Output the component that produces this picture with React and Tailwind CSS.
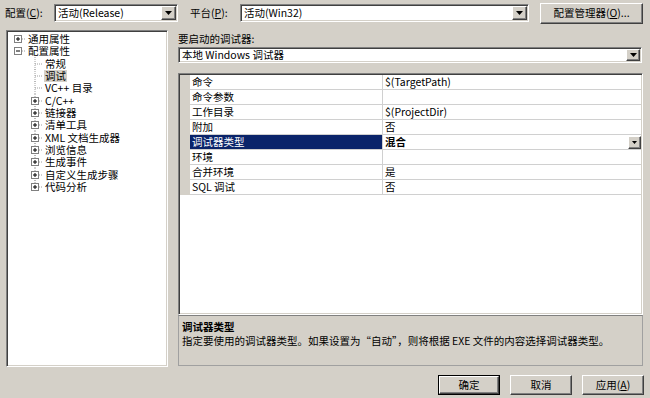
import React from "react";

const raised =
  "bg-[#d4d0c8] border border-t-white border-l-white border-r-[#404040] border-b-[#404040] shadow-[inset_-1px_-1px_0_#808080]";
const sunken =
  "bg-white border border-t-[#808080] border-l-[#808080] border-r-white border-b-white shadow-[inset_1px_1px_0_#404040,inset_-1px_-1px_0_#d4d0c8]";

const Arrow = () => (
  <svg width="7" height="4" viewBox="0 0 7 4">
    <path d="M0 0h7L3.5 4z" fill="#000" />
  </svg>
);

const Combo = ({ text, className }) => (
  <div className={`${sunken} ${className} flex items-stretch p-[1px]`}>
    <div className="flex-1 flex items-center pl-[2px] whitespace-nowrap overflow-hidden">
      {text}
    </div>
    <div className={`${raised} w-[15px] flex items-center justify-center`}>
      <Arrow />
    </div>
  </div>
);

const Label = ({ text, k }) => (
  <span className="whitespace-nowrap">
    {text}(<u>{k}</u>):
  </span>
);

// tree connector drawings
const TopGlyph = ({ open }) => (
  <svg width="20" height="12" viewBox="0 0 20 12" className="shrink-0">
    <rect x="6.5" y="2.5" width="7" height="7" fill="#fff" stroke="#808080" />
    <path d="M8 6h4" stroke="#000" />
    {!open && <path d="M10 4v4" stroke="#000" />}
    <path d="M14 6h4" stroke="#a0a0a0" strokeDasharray="1 1" />
  </svg>
);

const ChildGlyph = ({ box, last }) => (
  <svg width="37" height="12" viewBox="0 0 37 12" className="shrink-0 overflow-visible">
    <path
      d={last ? "M27 -1V6" : "M27 -1V13"}
      stroke="#a0a0a0"
      strokeDasharray="1 1"
    />
    <path d={box ? "M31 6h4" : "M27 6h8"} stroke="#a0a0a0" strokeDasharray="1 1" />
    {box && (
      <>
        <rect x="23.5" y="2.5" width="7" height="7" fill="#fff" stroke="#808080" />
        <path d="M25 6h4M27 4v4" stroke="#000" />
      </>
    )}
  </svg>
);

const tree = [
  { t: "常规" },
  { t: "调试", sel: true },
  { t: "VC++ 目录" },
  { t: "C/C++", box: true },
  { t: "链接器", box: true },
  { t: "清单工具", box: true },
  { t: "XML 文档生成器", box: true },
  { t: "浏览信息", box: true },
  { t: "生成事件", box: true },
  { t: "自定义生成步骤", box: true },
  { t: "代码分析", box: true },
];

const props = [
  ["命令", "$(TargetPath)"],
  ["命令参数", ""],
  ["工作目录", "$(ProjectDir)"],
  ["附加", "否"],
  ["调试器类型", "混合", true],
  ["环境", ""],
  ["合并环境", "是"],
  ["SQL 调试", "否"],
];

export default function App() {
  return (
    <div className="w-[650px] h-[398px] bg-[#d4d0c8] text-black text-[10.5px] leading-[12px] font-['Noto_Sans_CJK_SC',sans-serif] overflow-hidden">
      {/* top row */}
      <div className="flex items-center h-[26px] pl-[5px]">
        <div className="w-[49px]">
          <Label text="配置" k="C" />
        </div>
        <Combo text="活动(Release)" className="w-[124px] h-[18px]" />
        <div className="w-[50px] ml-[12px]">
          <Label text="平台" k="P" />
        </div>
        <Combo text="活动(Win32)" className="w-[289px] h-[18px]" />
        <button className={`${raised} ml-[11px] w-[103px] h-[21px] flex items-center justify-center`}>
          配置管理器(<u>O</u>)...
        </button>
      </div>

      {/* main */}
      <div className="flex mt-[4px] pl-[6px]">
        <div className={`${sunken} w-[162px] h-[337px] p-[1px] pt-[2px]`}>
          <div className="flex items-center h-[12.33px]">
            <TopGlyph />
            <span>通用属性</span>
          </div>
          <div className="flex items-center h-[12.33px]">
            <TopGlyph open />
            <span>配置属性</span>
          </div>
          {tree.map((n, i) => (
            <div key={n.t} className="flex items-center h-[12.33px]">
              <ChildGlyph box={n.box} last={i === tree.length - 1} />
              <span className={n.sel ? "bg-[#d4d0c8] px-[1px] -ml-[1px]" : ""}>{n.t}</span>
            </div>
          ))}
        </div>

        <div className="ml-[10px] w-[465px] flex flex-col">
          <div className="h-[17px] flex items-center">要启动的调试器:</div>
          <div className={`${sunken} w-[464px] h-[16px] flex items-stretch p-[1px]`}>
            <div className="flex-1 flex items-center pl-[2px]">本地 Windows 调试器</div>
            <div className={`${raised} w-[14px] flex items-center justify-center`}>
              <Arrow />
            </div>
          </div>

          <div className={`${sunken} mt-[10px] h-[242px] p-[1px]`}>
            {props.map(([k, v, sel]) => (
              <div key={k} className="flex h-[15px]">
                <div className="w-[10px] bg-[#d4d0c8]" />
                <div
                  className={`w-[193px] border-b border-r border-[#d0d0d0] pl-[2px] flex items-center ${
                    sel ? "bg-[#0a246a] text-white" : ""
                  }`}
                >
                  {k}
                </div>
                <div className="flex-1 border-b border-[#d0d0d0] pl-[2px] flex items-center justify-between">
                  <span className={sel ? "font-bold" : ""}>{v}</span>
                  {sel && (
                    <div className={`${raised} w-[13px] h-[13px] flex items-center justify-center`}>
                      <svg width="5" height="3" viewBox="0 0 5 3">
                        <path d="M0 0h5L2.5 3z" fill="#000" />
                      </svg>
                    </div>
                  )}
                </div>
              </div>
            ))}
          </div>

          <div className="h-[51px] border border-t-[#808080] border-l-[#a0a0a0] border-r-[#a0a0a0] border-b-[#a0a0a0] pl-[3px] pt-[4px]">
            <div className="font-bold leading-[14px]">调试器类型</div>
            <div className="leading-[14px] whitespace-nowrap">
              指定要使用的调试器类型。如果设置为“自动”，则将根据 EXE 文件的内容选择调试器类型。
            </div>
          </div>
        </div>
      </div>

      {/* buttons */}
      <div className="flex justify-end gap-[10px] pr-[6px] mt-[8px]">
        <div className="border border-black">
          <button className={`${raised} w-[60px] h-[18px] flex items-center justify-center`}>确定</button>
        </div>
        <button className={`${raised} w-[62px] h-[20px] flex items-center justify-center`}>取消</button>
        <button className={`${raised} w-[62px] h-[20px] flex items-center justify-center`}>
          应用(<u>A</u>)
        </button>
      </div>
    </div>
  );
}
